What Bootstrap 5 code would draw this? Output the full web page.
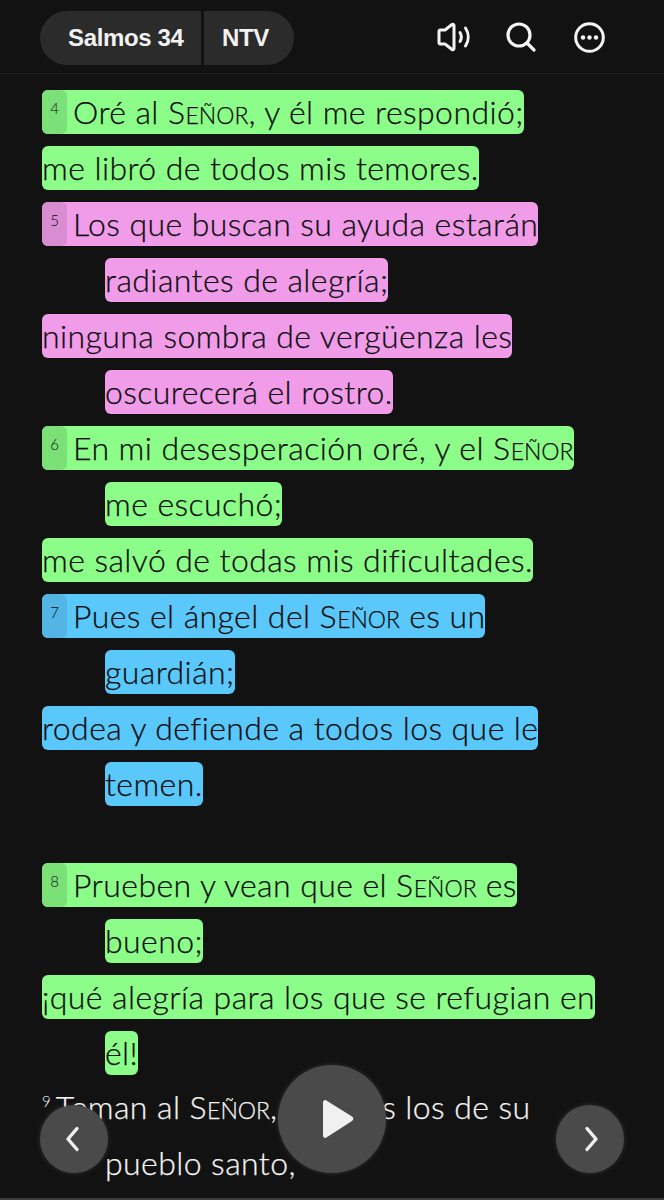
<!doctype html>
<html lang="es">
<head>
<meta charset="utf-8">
<title>Salmos 34</title>
<link href="https://cdn.jsdelivr.net/npm/bootstrap@5.3.0/dist/css/bootstrap.min.css" rel="stylesheet">
<style>
html,body{height:100%;background:#121212;}
.reader{height:1200px;overflow:hidden;background:#121212;color:#f4f4f4;font-family:Lato,"Liberation Sans",sans-serif;position:relative;}
.topbar{height:74px;border-bottom:1px solid #1d1d1d;padding:11px 0 0 40px;}
.ref-pill{height:54px;border-radius:27px;overflow:hidden;gap:3px;background:#121212;}
.ref-pill span{background:#2b2b2b;color:#f2f2f2;font-family:"Liberation Sans",sans-serif;font-weight:700;font-size:24px;letter-spacing:-.35px;}
.ref-book{width:161px;padding-left:28px;}
.ref-ver{width:90px;padding-left:18px;}
.tools{margin-left:auto;padding-right:59px;height:52px;}
.tool-sound{margin-right:35px;}
.tool-search{margin-right:38px;}
.passage{padding:10px 0 0 42px;font-size:32px;font-weight:300;letter-spacing:.42px;-webkit-text-stroke:.25px currentColor;}
.ln{height:56px;white-space:nowrap;padding-top:6px;}
.ln.ind{padding-left:63px;}
.ln.gap-before{margin-top:45px;}
.hl{display:inline-block;height:44px;line-height:44px;border-radius:6px;color:#0d0d0d;vertical-align:top;}
.g{background:#8bfd88;}
.p{background:#f09ce9;}
.b{background:#5ac8fb;}
.vn{display:inline-block;vertical-align:top;font-size:15px;width:25px;height:44px;text-align:center;line-height:36px;border-radius:6px;margin-right:6px;letter-spacing:0;-webkit-text-stroke:0;font-weight:300;}
.g .vn{background:#7be078;}
.p .vn{background:#d88cd2;}
.b .vn{background:#52b5e3;}
.vn-plain{display:inline-block;vertical-align:top;font-size:15px;margin-right:5px;line-height:28px;letter-spacing:0;-webkit-text-stroke:0;font-weight:300;}
.plain{display:inline-block;vertical-align:top;line-height:40px;}
.sc{font-size:.72em;letter-spacing:0;}
.fab{position:absolute;border-radius:50%;background:#4a4a4a;box-shadow:0 0 5px rgba(255,255,255,.14);}
.fab-prev{left:40px;top:1105px;width:68px;height:68px;}
.fab-next{left:556px;top:1105px;width:68px;height:68px;}
.fab-play{left:278px;top:1065px;width:108px;height:108px;padding-left:9px!important;}
.edge{position:absolute;left:0;right:0;bottom:0;height:2px;background:#3c3c3c;}
</style>
</head>
<body>
<div class="reader">
  <header class="topbar d-flex">
    <div class="ref-pill d-flex">
      <span class="ref-book d-flex align-items-center">Salmos 34</span>
      <span class="ref-ver d-flex align-items-center">NTV</span>
    </div>
    <div class="tools d-flex align-items-center">
      <svg class="tool-sound" width="34" height="30" viewBox="0 0 34 30" fill="none" stroke="#f4f4f4" stroke-width="3" stroke-linecap="round" stroke-linejoin="round"><path d="M2 9.500c0-1 .6-1.500 1.500-1.500H8l7-5.500c.8-.6 2-.2 2 1v23c0 1.200-1.200 1.600-2 1l-7-5.500H3.500C2.600 22 2 21.500 2 20.500z"/><path d="M23 10.500c1.800 3 1.800 6 0 9"/><path d="M28.500 6c3.600 5.500 3.600 12.500 0 18"/></svg>
      <svg class="tool-search" width="30" height="30" viewBox="0 0 30 30" fill="none" stroke="#f4f4f4" stroke-width="3.200" stroke-linecap="round"><circle cx="13" cy="13" r="11"/><path d="M21 21l7 7"/></svg>
      <svg width="31" height="31" viewBox="0 0 31 31"><circle cx="15.500" cy="15.500" r="13.800" fill="none" stroke="#f4f4f4" stroke-width="3"/><circle cx="9" cy="15.500" r="2.200" fill="#f4f4f4"/><circle cx="15.500" cy="15.500" r="2.200" fill="#f4f4f4"/><circle cx="22" cy="15.500" r="2.200" fill="#f4f4f4"/></svg>
    </div>
  </header>
  <main class="passage">
    <div class="ln"><span class="hl g"><span class="vn">4</span>Oré al S<span class="sc">EÑOR</span>, y él me respondió;</span></div>
    <div class="ln"><span class="hl g">me libró de todos mis temores.</span></div>
    <div class="ln"><span class="hl p"><span class="vn">5</span>Los que buscan su ayuda estarán</span></div>
    <div class="ln ind"><span class="hl p">radiantes de alegría;</span></div>
    <div class="ln"><span class="hl p">ninguna sombra de vergüenza les</span></div>
    <div class="ln ind"><span class="hl p">oscurecerá el rostro.</span></div>
    <div class="ln"><span class="hl g"><span class="vn">6</span>En mi desesperación oré, y el S<span class="sc">EÑOR</span></span></div>
    <div class="ln ind"><span class="hl g">me escuchó;</span></div>
    <div class="ln"><span class="hl g">me salvó de todas mis dificultades.</span></div>
    <div class="ln"><span class="hl b"><span class="vn">7</span>Pues el ángel del S<span class="sc">EÑOR</span> es un</span></div>
    <div class="ln ind"><span class="hl b">guardián;</span></div>
    <div class="ln"><span class="hl b">rodea y defiende a todos los que le</span></div>
    <div class="ln ind"><span class="hl b">temen.</span></div>
    <div class="ln gap-before"><span class="hl g"><span class="vn">8</span>Prueben y vean que el S<span class="sc">EÑOR</span> es</span></div>
    <div class="ln ind"><span class="hl g">bueno;</span></div>
    <div class="ln"><span class="hl g">¡qué alegría para los que se refugian en</span></div>
    <div class="ln ind"><span class="hl g">él!</span></div>
    <div class="ln"><span class="vn-plain">9</span><span class="plain">Teman al S<span class="sc">EÑOR</span>, ustedes los de su</span></div>
    <div class="ln ind"><span class="plain">pueblo santo,</span></div>
  </main>
  <button class="fab fab-prev btn p-0 border-0 d-flex align-items-center justify-content-center" aria-label="Anterior">
    <svg width="20" height="26" viewBox="0 0 20 26" fill="none" stroke="#f0f0f0" stroke-width="3.400" stroke-linecap="round" stroke-linejoin="round"><path d="M13 2.500L4 13l9 10.500"/></svg>
  </button>
  <button class="fab fab-play btn p-0 border-0 d-flex align-items-center justify-content-center" aria-label="Reproducir">
    <svg width="40" height="44" viewBox="0 0 40 44"><path d="M6 5.500c0-2 1.800-3 3.400-2L35 19.500c1.800 1.100 1.800 3.500 0 4.600L9.400 40.500c-1.600 1-3.400 0-3.400-2z" fill="#f0f0f0"/></svg>
  </button>
  <button class="fab fab-next btn p-0 border-0 d-flex align-items-center justify-content-center" aria-label="Siguiente">
    <svg width="20" height="26" viewBox="0 0 20 26" fill="none" stroke="#f0f0f0" stroke-width="3.400" stroke-linecap="round" stroke-linejoin="round"><path d="M7 2.500L16 13 7 23.500"/></svg>
  </button>
  <div class="edge"></div>
</div>
</body>
</html>
